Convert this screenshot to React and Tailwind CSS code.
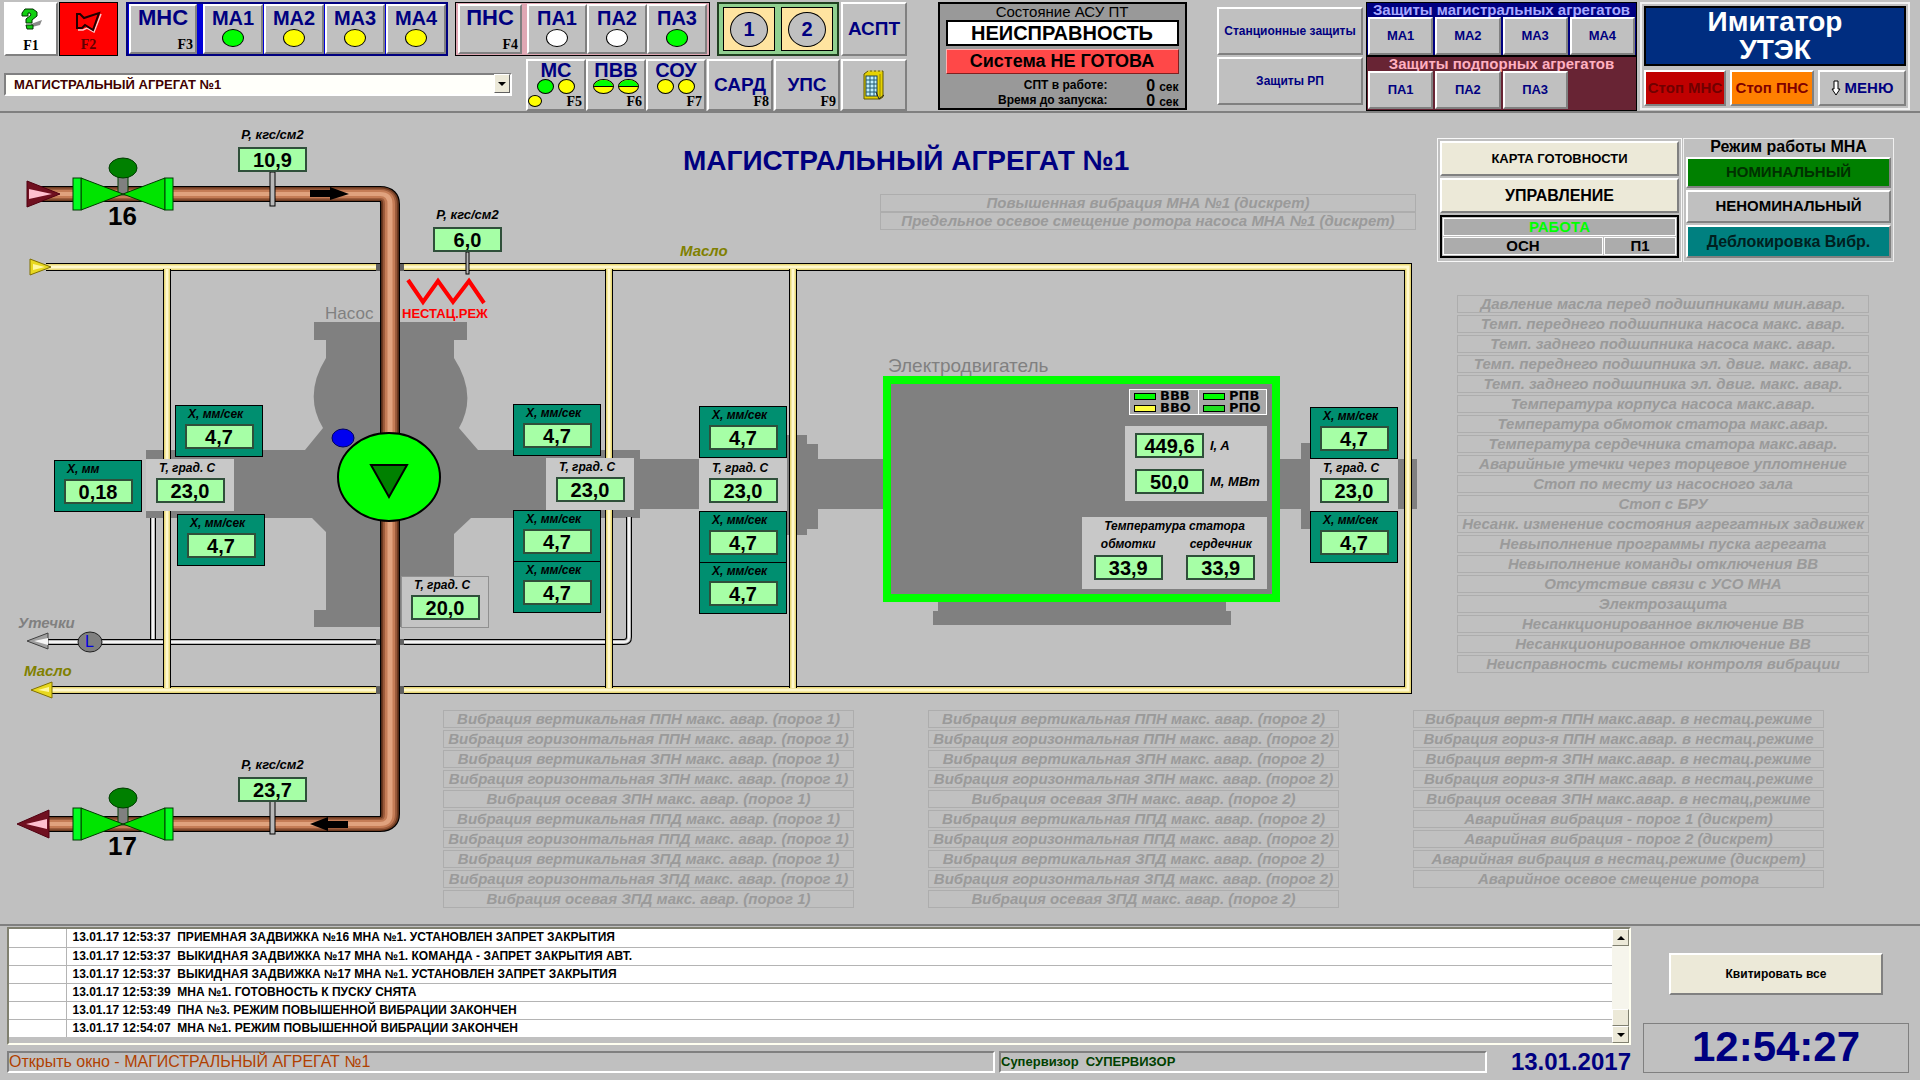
import React from 'react';

const BEVEL = 'border-2 border-t-white border-l-white border-b-[#808080] border-r-[#808080]';

function BevelButton({ className = '', children, ...rest }) {
  return (
    <button type="button" className={`${BEVEL} relative ${className}`} {...rest}>
      {children}
    </button>
  );
}

const LAMP = { green: 'bg-[#00ff00]', yellow: 'bg-[#ffff00]', white: 'bg-white' };

function Lamp({ color, className = 'h-[18px] w-[22px]' }) {
  return <span className={`block rounded-[50%] border border-black ${LAMP[color]} ${className}`} />;
}

function SplitLamp() {
  return (
    <span className="flex h-[15px] w-[21px] flex-col overflow-hidden rounded-[50%] border border-black bg-[#ffff00]">
      <span className="h-[7px] border-b border-black bg-[#00ff00]" />
    </span>
  );
}

function KeyHint({ children }) {
  return (
    <span className="absolute right-0.5 bottom-0 font-['Liberation_Serif',serif] text-sm leading-[15px] font-bold text-black">
      {children}
    </span>
  );
}

function UnitButton({ name, color }) {
  return (
    <BevelButton className="flex w-[60px] flex-col items-center bg-[#c0c0c0] pt-px text-xl leading-[22px] font-bold text-[#000080]">
      {name}
      <Lamp color={color} />
    </BevelButton>
  );
}

function SystemButton({ name, hint, lamps, extra }) {
  return (
    <BevelButton className="flex w-[60px] flex-col items-center bg-[#c0c0c0] text-xl leading-[18px] font-bold text-[#000080]">
      {name}
      <span className="flex gap-1">{lamps}</span>
      {extra}
      <KeyHint>{hint}</KeyHint>
    </BevelButton>
  );
}

function HelpIcon() {
  return (
    <svg viewBox="0 0 24 22" className="h-[22px] w-6" aria-hidden="true">
      <path d="M12 16 L23 12 L21 17 L13 19Z" fill="#8a8a8a" />
      <path
        d="M3 8 V5 L6 1 H14 L18 4 V8 L13 12 V15 H7 V11 L12 7 L11 5 H9 V8Z"
        fill="#10d010"
        stroke="#003000"
        strokeWidth="1"
      />
      <path d="M7 17 H14 V21 H8Z" fill="#10d010" stroke="#003000" strokeWidth="1" />
    </svg>
  );
}

function HornIcon() {
  return (
    <svg viewBox="0 0 28 22" className="h-[22px] w-7" aria-hidden="true">
      <path d="M3 19 H8 L12 17 L19 21 L26 3" fill="none" stroke="#ffc8c8" strokeWidth="1.5" />
      <path d="M2 3 H5 L9 7 L24 2 L18 19 L10 14 L7 17 H2Z" fill="#f00" stroke="#200000" strokeWidth="2" />
    </svg>
  );
}

function CabinetIcon() {
  return (
    <svg viewBox="0 0 24 32" className="h-8 w-6" aria-hidden="true">
      <path d="M2 5 L6 2 H21 V28 L18 30 H2Z" fill="#e6d200" stroke="#605800" />
      <path d="M6 2 H21" stroke="#fff08a" strokeDasharray="2 2" />
      <rect x="4" y="7" width="11" height="20" fill="#bfefff" stroke="#204050" />
      <path d="M8 7 V27 M12 7 V27 M4 11 H15 M4 15 H15 M4 19 H15 M4 23 H15" stroke="#205a70" />
      <path d="M18 5 V29" stroke="#8c8000" />
      <path d="M14 23 L17 30 L22 26" fill="none" stroke="#222" />
    </svg>
  );
}

function ProtectionGroup({ title, units, className, titleClass }) {
  return (
    <section className={`border border-black px-px ${className}`}>
      <h2 className={`text-center text-[15px] leading-[14px] font-bold whitespace-nowrap ${titleClass}`}>{title}</h2>
      <div className="grid h-[38px] grid-cols-4 gap-0.5">
        {units.map((u) => (
          <BevelButton key={u} className="bg-[#c0c0c0] text-[13px] font-bold text-[#000080]">
            {u}
          </BevelButton>
        ))}
      </div>
    </section>
  );
}

function Header() {
  return (
    <header className="mb-px flex h-[113px] justify-between border-b-2 border-[#808080] pt-0.5 pr-2.5 pl-1">
      <div className="flex w-[903px] flex-col gap-[3px]">
        <div className="flex h-[54px]">
          <div className="flex gap-px">
            <BevelButton className="flex w-[54px] flex-col items-center justify-between bg-white pt-1">
              <HelpIcon />
              <span className="font-['Liberation_Serif',serif] text-sm leading-4 font-bold">F1</span>
            </BevelButton>
            <button type="button" className="flex w-[59px] flex-col items-center justify-between border border-black bg-[#ff0000] pt-2 pb-0.5">
              <HornIcon />
              <span className="font-['Liberation_Serif',serif] text-sm leading-4 font-bold text-[#600000]">F2</span>
            </button>
          </div>
          <div className="ml-2 flex gap-px border-2 border-[#000080] bg-[#0000d8] pl-px">
            <BevelButton className="mr-[5px] flex w-[68px] justify-center bg-[#c0c0c0] text-[22px] leading-6 font-bold text-[#000080]">
              МНС
              <KeyHint>F3</KeyHint>
            </BevelButton>
            <UnitButton name="МА1" color="green" />
            <UnitButton name="МА2" color="yellow" />
            <UnitButton name="МА3" color="yellow" />
            <UnitButton name="МА4" color="yellow" />
          </div>
          <div className="ml-[7px] flex border border-black bg-[#e0a8b4] px-0.5 py-px">
            <BevelButton className="mr-[5px] flex w-[64px] justify-center bg-[#c0c0c0] text-[22px] leading-6 font-bold text-[#000080]">
              ПНС
              <KeyHint>F4</KeyHint>
            </BevelButton>
            <UnitButton name="ПА1" color="white" />
            <UnitButton name="ПА2" color="white" />
            <UnitButton name="ПА3" color="green" />
          </div>
          <div className="ml-[7px] flex gap-1.5 border-2 border-[#204020] bg-[#90d090] px-1 py-[3px]">
            {['1', '2'].map((n) => (
              <button key={n} type="button" className="flex w-[52px] items-center justify-center border border-black bg-[#ffe4a0]">
                <span className="flex h-[35px] w-[38px] items-center justify-center rounded-[50%] border border-black bg-[#c0c0c0] text-xl font-bold text-[#000080]">
                  {n}
                </span>
              </button>
            ))}
          </div>
          <BevelButton className="ml-0.5 flex-1 bg-[#c0c0c0] text-[19px] font-bold text-[#000080]">АСПТ</BevelButton>
        </div>
        <div className="flex h-[52px] justify-between">
          <div className="relative mt-[13px] h-[23px] w-[508px]">
            <select
              aria-label="Окно"
              className="h-[23px] w-full appearance-none border-2 border-t-[#808080] border-r-white border-b-white border-l-[#808080] bg-[#fffffa] py-0 pr-5 pl-2 text-[13px] leading-[19px] font-bold text-[#400000]"
            >
              <option>МАГИСТРАЛЬНЫЙ АГРЕГАТ №1</option>
            </select>
            <span className="pointer-events-none absolute top-0.5 right-0.5 flex h-[19px] w-4 items-center justify-center border border-t-white border-r-[#606060] border-b-[#606060] border-l-white bg-[#ece9d8]">
              <svg viewBox="0 0 8 4" className="h-1 w-2"><path d="M0 0H8L4 4Z" /></svg>
            </span>
          </div>
          <div className="flex gap-px">
            <div className="flex">
              <SystemButton
                name="МС"
                hint="F5"
                lamps={<><Lamp color="green" className="h-[15px] w-[17px]" /><Lamp color="yellow" className="h-[15px] w-[17px]" /></>}
                extra={<Lamp color="yellow" className="absolute bottom-0.5 left-0 h-3 w-[14px]" />}
              />
              <SystemButton name="ПВВ" hint="F6" lamps={<><SplitLamp /><SplitLamp /></>} />
              <SystemButton
                name="СОУ"
                hint="F7"
                lamps={<><Lamp color="yellow" className="h-[15px] w-[17px]" /><Lamp color="yellow" className="h-[15px] w-[17px]" /></>}
              />
            </div>
            <BevelButton className="w-[66px] bg-[#c0c0c0] text-[19px] font-bold text-[#000080]">САРД<KeyHint>F8</KeyHint></BevelButton>
            <BevelButton className="w-[66px] bg-[#c0c0c0] text-[19px] font-bold text-[#000080]">УПС<KeyHint>F9</KeyHint></BevelButton>
            <BevelButton className="flex w-[66px] items-center justify-center bg-[#c0c0c0]" aria-label="Шкаф"><CabinetIcon /></BevelButton>
          </div>
        </div>
      </div>

      <section className="flex h-[108px] w-[249px] flex-col border-2 border-black bg-[#999999] px-1.5">
        <h2 className="text-center text-[15px] leading-4">Состояние АСУ ПТ</h2>
        <p className="border-2 border-black bg-white text-center text-xl leading-[22px] font-bold">НЕИСПРАВНОСТЬ</p>
        <p className="mt-[3px] border border-t-[#ffb0b0] border-r-[#802020] border-b-[#802020] border-l-[#ffb0b0] bg-[#ff4848] text-center text-lg leading-[23px] font-bold">
          Система НЕ ГОТОВА
        </p>
        <dl className="mt-1 grid auto-rows-[15px] grid-cols-[162px_1fr] text-xs leading-[15px] font-bold">
          <dt className="text-right">СПТ в работе:</dt>
          <dd className="flex items-baseline justify-end gap-1"><span className="text-base leading-[15px]">0</span> сек</dd>
          <dt className="text-right">Время до запуска:</dt>
          <dd className="flex items-baseline justify-end gap-1"><span className="text-base leading-[15px]">0</span> сек</dd>
        </dl>
      </section>

      <div className="flex gap-[3px]">
        <div className="flex w-[146px] flex-col gap-0.5 pt-[5px]">
          <BevelButton className="h-12 bg-[#c0c0c0] text-xs font-bold text-[#000080]">Станционные защиты</BevelButton>
          <BevelButton className="h-12 bg-[#c0c0c0] text-xs font-bold text-[#000080]">Защиты РП</BevelButton>
        </div>
        <div className="w-[271px]">
          <ProtectionGroup title="Защиты магистральных агрегатов" units={['МА1', 'МА2', 'МА3', 'МА4']} className="h-[54px] bg-[#000080]" titleClass="text-[#a8a8ff]" />
          <ProtectionGroup title="Защиты подпорных агрегатов" units={['ПА1', 'ПА2', 'ПА3']} className="h-[55px] bg-[#682434]" titleClass="text-[#ffb0c0]" />
        </div>
        <div className="flex h-[108px] w-[270px] flex-col gap-1 border-2 border-[#f0f0f0] p-0.5">
          <h1 className="h-[60px] border-2 border-black bg-[#002d80] text-center text-[28px] leading-7 font-bold text-white">
            Имитатор
            <br />
            УТЭК
          </h1>
          <div className="flex h-[37px] gap-1">
            <BevelButton className="w-[82px] bg-[#c00000] text-[15px] font-bold whitespace-nowrap text-[#700000]">Стоп МНС</BevelButton>
            <BevelButton className="w-[84px] bg-[#ff8000] text-[15px] font-bold whitespace-nowrap text-[#800000]">Стоп ПНС</BevelButton>
            <BevelButton className="flex flex-1 items-center justify-center gap-1 bg-[#c0c0c0] text-[15px] font-bold text-[#000080]">
              <svg viewBox="0 0 10 16" className="h-4 w-2.5"><path d="M3 1H7V9H9L5 15L1 9H3Z" fill="#fff" stroke="#000" /></svg>
              МЕНЮ
            </BevelButton>
          </div>
        </div>
      </div>
    </header>
  );
}

const TOP_ALARMS = [
  'Повышенная вибрация МНА №1 (дискрет)',
  'Предельное осевое смещение ротора насоса МНА №1 (дискрет)',
];

const SIDE_ALARMS = [
  'Давление масла перед подшипниками мин.авар.',
  'Темп. переднего подшипника насоса макс. авар.',
  'Темп. заднего подшипника насоса макс. авар.',
  'Темп. переднего подшипника эл. двиг. макс. авар.',
  'Темп. заднего подшипника эл. двиг. макс. авар.',
  'Температура корпуса насоса макс.авар.',
  'Температура обмоток статора макс.авар.',
  'Температура сердечника статора макс.авар.',
  'Аварийные утечки через торцевое уплотнение',
  'Стоп по месту из насосного зала',
  'Стоп с БРУ',
  'Несанк. изменение состояния агрегатных задвижек',
  'Невыполнение программы пуска агрегата',
  'Невыполнение команды отключения ВВ',
  'Отсутствие связи с УСО МНА',
  'Электрозащита',
  'Несанкционированное включение ВВ',
  'Несанкционированное отключение ВВ',
  'Неисправность системы контроля вибрации',
];

const thresholdAlarms = (n) =>
  ['ППН', 'ЗПН', 'ППД', 'ЗПД'].flatMap((p) => [
    `Вибрация вертикальная ${p} макс. авар. (порог ${n})`,
    `Вибрация горизонтальная ${p} макс. авар. (порог ${n})`,
    ...(p[0] === 'З' ? [`Вибрация осевая ${p} макс. авар. (порог ${n})`] : []),
  ]);

const MODE_ALARMS = [
  'Вибрация верт-я ППН макс.авар. в нестац.режиме',
  'Вибрация гориз-я ППН макс.авар. в нестац.режиме',
  'Вибрация верт-я ЗПН макс.авар. в нестац.режиме',
  'Вибрация гориз-я ЗПН макс.авар. в нестац.режиме',
  'Вибрация осевая ЗПН макс.авар. в нестац,режиме',
  'Аварийная вибрация - порог 1 (дискрет)',
  'Аварийная вибрация - порог 2 (дискрет)',
  'Аварийная вибрация в нестац.режиме (дискрет)',
  'Аварийное осевое смещение ротора',
];

function AlarmList({ items, className = '' }) {
  return (
    <ul className={`flex flex-col gap-0.5 text-center text-[15px] leading-4 font-bold whitespace-nowrap text-[#9a9a9a] italic ${className}`}>
      {items.map((t) => (
        <li key={t} className="h-[18px] border border-[#adadad]">{t}</li>
      ))}
    </ul>
  );
}

function ValueBox({ children }) {
  return (
    <output className="block h-[25px] w-[69px] border-2 border-[#2f4f3a] bg-[#a6ffa6] text-center text-xl leading-[22px] font-bold text-black not-italic">
      {children}
    </output>
  );
}

const CARD_STYLE = {
  vib: 'border border-black bg-[#008f70]',
  temp: 'border border-[#c8c8c8] bg-[#c8c8c8]',
  tempLined: 'border border-[#909090] bg-[#c4c4c4]',
};

// Measurement cards: canvas x, y, kind, caption, value.
const CARDS = [
  [175, 291, 'vib', 'X, мм/сек', '4,7'],
  [54, 346, 'vib', 'X, мм', '0,18'],
  [146, 345, 'temp', 'T, град. C', '23,0'],
  [177, 400, 'vib', 'X, мм/сек', '4,7'],
  [513, 290, 'vib', 'X, мм/сек', '4,7'],
  [546, 344, 'temp', 'T, град. C', '23,0'],
  [513, 396, 'vib', 'X, мм/сек', '4,7'],
  [513, 447, 'vib', 'X, мм/сек', '4,7'],
  [699, 292, 'vib', 'X, мм/сек', '4,7'],
  [699, 345, 'temp', 'T, град. C', '23,0'],
  [699, 397, 'vib', 'X, мм/сек', '4,7'],
  [699, 448, 'vib', 'X, мм/сек', '4,7'],
  [1310, 293, 'vib', 'X, мм/сек', '4,7'],
  [1310, 345, 'temp', 'T, град. C', '23,0'],
  [1310, 397, 'vib', 'X, мм/сек', '4,7'],
  [401, 462, 'tempLined', 'T, град. C', '20,0'],
];

const GAUGES = [
  [238, 13, '10,9'],
  [433, 93, '6,0'],
  [238, 643, '23,7'],
];

const PIPE_LAYERS = [
  ['#000000', 16],
  ['#6e3a20', 14],
  ['#9c5c3c', 11],
  ['#c47c56', 8],
  ['#e0a27e', 4],
];

function Valve({ y }) {
  return (
    <g stroke="#003c00" strokeWidth="1">
      <rect x="118" y={y - 17} width="10" height="18" fill="#808080" />
      <path d={`M81 ${y - 16} L123 ${y} L81 ${y + 16}Z`} fill="#00e400" />
      <path d={`M165 ${y - 16} L123 ${y} L165 ${y + 16}Z`} fill="#00e400" />
      <rect x="73" y={y - 16} width="8" height="32" fill="#00ff20" />
      <rect x="165" y={y - 16} width="8" height="32" fill="#00ff20" />
      <ellipse cx="123" cy={y - 26} rx="14" ry="10" fill="#008000" />
    </g>
  );
}

function YellowPipe({ d }) {
  return (
    <>
      <path d={d} fill="none" stroke="#000" strokeWidth="8" />
      <path d={d} fill="none" stroke="#e8d878" strokeWidth="6" />
      <path d={d} fill="none" stroke="#fff8cc" strokeWidth="3" />
    </>
  );
}

function GreyPipe({ d }) {
  return (
    <>
      <path d={d} fill="none" stroke="#000" strokeWidth="6" />
      <path d={d} fill="none" stroke="#b8b8b8" strokeWidth="4" />
      <path d={d} fill="none" stroke="#f4f4f4" strokeWidth="2" />
    </>
  );
}

function Drawing() {
  return (
    <svg viewBox="0 114 1420 810" className="block h-[810px] w-[1420px]" aria-hidden="true">
      <g fill="#808080">
        <path d="M314 322 H467 V340 H454 V358 Q478 395 459 428 L478 450 H640 V459 H883 V509 H640 V518 H471 L454 534 V627 H314 V610 H326 V532 L312 518 H146 V450 H305 L323 428 Q303 395 326 358 V340 H314Z" />
        <rect x="787" y="435" width="20" height="100" />
        <rect x="807" y="444" width="11" height="85" />
        <rect x="1279" y="459" width="138" height="50" />
        <rect x="1301" y="443" width="70" height="86" />
        <rect x="938" y="600" width="288" height="12" />
        <rect x="933" y="611" width="298" height="14" />
      </g>

      <GreyPipe d="M153 518 V641" />
      <GreyPipe d="M48 642 H624 Q629 642 629 637 V517" />
      <path d="M27 641 L48 633 V649Z" fill="#a0a0a0" stroke="#404040" />
      <path d="M34 641 L48 638 V645Z" fill="#f4f4f4" />
      <ellipse cx="90" cy="642" rx="12" ry="10" fill="#808080" stroke="#202020" />

      <YellowPipe d="M46 267 H1408 V690 H50" />
      <YellowPipe d="M167 269 V688" />
      <YellowPipe d="M609 269 V688" />
      <YellowPipe d="M793 269 V688" />
      <path d="M30 259 L51 267 L30 275Z" fill="#e8d820" stroke="#807000" />
      <path d="M33 264 L45 267 L33 270Z" fill="#fff8a0" />
      <path d="M52 682 L31 690 L52 698Z" fill="#e8d820" stroke="#807000" />
      <path d="M49 687 L38 690 L49 692Z" fill="#fff8a0" />
      <g fill="#606060">
        <rect x="376" y="264" width="28" height="7" />
        <rect x="376" y="686" width="28" height="8" />
        <rect x="376" y="639" width="28" height="6" />
      </g>

      <g transform="scale(1.25 1)" fill="none">
        {PIPE_LAYERS.map(([stroke, width]) => (
          <path key={stroke} d="M24 194 H304 Q312 194 312 204 V814 Q312 824 304 824 H34" stroke={stroke} strokeWidth={width} />
        ))}
      </g>
      <path d="M27 181 L60 194 L27 207Z" fill="#701020" stroke="#500010" />
      <path d="M29 189 L52 194 L29 199Z" fill="#ffc0d0" />
      <path d="M49 810 L17 824 L49 838Z" fill="#701020" stroke="#500010" />
      <path d="M47 819 L26 824 L47 829Z" fill="#ffc0d0" />
      <Valve y={194} />
      <Valve y={824} />
      <g fill="#b8b8b8" stroke="#000">
        <rect x="270" y="172" width="5" height="34" />
        <rect x="270" y="801" width="5" height="33" />
        <rect x="466" y="252" width="3" height="22" />
      </g>
      <path d="M310 190 H330 V187 L349 194 L330 200 V197 H310Z" />
      <path d="M348 821 H328 V817 L310 824 L328 831 V828 H348Z" />

      <ellipse cx="389" cy="477" rx="51" ry="44" fill="#00ff00" stroke="#000" strokeWidth="2" />
      <path d="M371 465 H407 L389 497Z" fill="#008000" stroke="#000" strokeWidth="2" />
      <ellipse cx="343" cy="438" rx="11" ry="9" fill="#0000f0" stroke="#000060" />
      <path d="M408 280 L423 302 L438 281 L453 302 L469 281 L484 303" fill="none" stroke="#ff0000" strokeWidth="4" />
    </svg>
  );
}

function MotorPanel() {
  return (
    <section className="absolute top-[262px] left-[883px] h-[226px] w-[397px] border-8 border-[#00ff00] bg-[#808080]">
      <div className="flex h-full flex-col items-end pt-[5px] pr-[5px] pb-[5px]">
        <ul className="grid h-[26px] grid-cols-2 border border-white bg-[#a8a8a8] font-['DejaVu_Sans',sans-serif] text-[13px] leading-3 font-bold">
          {[
            ['ВВВ', 'bg-[#00ff00]'],
            ['РПВ', 'bg-[#00ff00]'],
            ['ВВО', 'bg-[#ffff40]'],
            ['РПО', 'bg-[#20e020]'],
          ].map(([name, color]) => (
            <li key={name} className="flex w-[68px] items-center gap-1 pl-1 even:border-l even:border-white">
              <span className={`h-[7px] w-[22px] border border-black ${color}`} />
              {name}
            </li>
          ))}
        </ul>
        <dl className="mt-[11px] grid h-[75px] w-[142px] grid-cols-[69px_1fr] content-between items-center gap-x-1.5 bg-[#c8c8c8] py-[7px] pl-[10px] text-[13px] font-bold italic">
          <dd><ValueBox>449,6</ValueBox></dd>
          <dt>I, A</dt>
          <dd><ValueBox>50,0</ValueBox></dd>
          <dt className="whitespace-nowrap">М, МВт</dt>
        </dl>
        <div className="mt-auto h-[72px] w-[185px] bg-[#c8c8c8] text-center text-xs leading-[18px] font-bold italic">
          <h3>Температура статора</h3>
          <div className="grid grid-cols-2 justify-items-center">
            <div className="flex flex-col items-center gap-0.5">обмотки<ValueBox>33,9</ValueBox></div>
            <div className="flex flex-col items-center gap-0.5">сердечник<ValueBox>33,9</ValueBox></div>
          </div>
        </div>
      </div>
    </section>
  );
}

function Mimic() {
  return (
    <section className="relative col-start-1 row-span-2 row-start-1 h-[810px] w-[1420px]">
      <Drawing />
      <h2 className="absolute top-[33px] left-[683px] text-[28px] leading-7 font-bold whitespace-nowrap text-[#000080]">МАГИСТРАЛЬНЫЙ АГРЕГАТ №1</h2>
      <AlarmList items={TOP_ALARMS} className="absolute top-[80px] left-[880px] w-[536px] gap-0!" />

      <span className="absolute top-[90px] left-[108px] text-[26px] leading-6 font-bold">16</span>
      <span className="absolute top-[720px] left-[108px] text-[26px] leading-6 font-bold">17</span>
      <span className="absolute top-[128px] left-[680px] text-[15px] leading-[18px] font-bold text-[#808000] italic">Масло</span>
      <span className="absolute top-[548px] left-[24px] text-[15px] leading-[18px] font-bold text-[#808000] italic">Масло</span>
      <span className="absolute top-[500px] left-[18px] text-[15px] leading-[18px] font-bold text-[#808080] italic">Утечки</span>
      <span className="absolute top-[519px] left-[85px] text-base leading-[18px] text-[#0000e0]">L</span>
      <span className="absolute top-[190px] left-[325px] text-[17px] leading-5 text-[#808080]">Насос</span>
      <span className="absolute top-[190px] left-[402px] text-[13px] leading-5 font-bold text-[#ff0000]">НЕСТАЦ.РЕЖ</span>
      <span className="absolute top-[242px] left-[888px] text-[19px] leading-5 text-[#808080]">Электродвигатель</span>

      {GAUGES.map(([x, y, value]) => (
        <div key={`${x}-${y}`} className="absolute flex w-[69px] flex-col items-center gap-1 whitespace-nowrap" style={{ left: x, top: y }}>
          <span className="text-[13px] leading-4 font-bold italic">P, кгс/см2</span>
          <ValueBox>{value}</ValueBox>
        </div>
      ))}
      {CARDS.map(([x, y, kind, caption, value]) => (
        <div key={`${x}-${y}`} className={`absolute flex h-[52px] w-[88px] flex-col items-center gap-0.5 ${CARD_STYLE[kind]}`} style={{ left: x, top: y }}>
          <span className="w-[62px] text-left text-xs leading-4 font-bold whitespace-nowrap italic">{caption}</span>
          <ValueBox>{value}</ValueBox>
        </div>
      ))}
      <MotorPanel />
    </section>
  );
}

function ControlPanel() {
  return (
    <div className="grid h-[124px] grid-cols-[245px_211px] gap-px">
      <section className="flex flex-col gap-0.5 border border-[#f8f8f8] p-0.5">
        <BevelButton className="h-[35px] bg-[#ece9d8] text-[13px] font-bold">КАРТА ГОТОВНОСТИ</BevelButton>
        <BevelButton className="h-[35px] bg-[#ece9d8] text-base font-bold">УПРАВЛЕНИЕ</BevelButton>
        <div className="grid h-[43px] grid-cols-[1fr_72px] gap-px border-2 border-black p-px text-center text-[15px] leading-4 font-bold">
          <span className="col-span-2 border border-white bg-[#acacac] text-[#00ff00]">РАБОТА</span>
          <span className="border border-white bg-[#acacac]">ОСН</span>
          <span className="border border-white bg-[#acacac]">П1</span>
        </div>
      </section>
      <section className="flex flex-col gap-0.5 border border-[#f0f0f0] px-0.5 text-[15px] font-bold">
        <h3 className="text-center text-base leading-4">Режим работы МНА</h3>
        <BevelButton className="h-[31px] bg-[#008000] text-[#003000]">НОМИНАЛЬНЫЙ</BevelButton>
        <BevelButton className="h-[33px] bg-[#c0c0c0]">НЕНОМИНАЛЬНЫЙ</BevelButton>
        <BevelButton className="h-[33px] bg-[#008080] text-base text-[#002020]">Деблокировка Вибр.</BevelButton>
      </section>
    </div>
  );
}

const LOG = [
  ['13.01.17 12:53:37', 'ПРИЕМНАЯ ЗАДВИЖКА №16 МНА №1. УСТАНОВЛЕН ЗАПРЕТ ЗАКРЫТИЯ'],
  ['13.01.17 12:53:37', 'ВЫКИДНАЯ ЗАДВИЖКА №17 МНА №1. КОМАНДА - ЗАПРЕТ ЗАКРЫТИЯ АВТ.'],
  ['13.01.17 12:53:37', 'ВЫКИДНАЯ ЗАДВИЖКА №17 МНА №1. УСТАНОВЛЕН ЗАПРЕТ ЗАКРЫТИЯ'],
  ['13.01.17 12:53:39', 'МНА №1. ГОТОВНОСТЬ К ПУСКУ СНЯТА'],
  ['13.01.17 12:53:49', 'ПНА №3. РЕЖИМ ПОВЫШЕННОЙ ВИБРАЦИИ ЗАКОНЧЕН'],
  ['13.01.17 12:54:07', 'МНА №1. РЕЖИМ ПОВЫШЕННОЙ ВИБРАЦИИ ЗАКОНЧЕН'],
];

const SCROLL_PART = 'flex h-[17px] items-center justify-center border border-t-white border-r-[#808070] border-b-[#808070] border-l-white bg-[#ece9d8]';

function Footer() {
  return (
    <footer className="flex min-h-[156px] flex-1 gap-3 border-t-2 border-[#808080] pr-[11px] pl-[7px]">
      <div className="flex min-w-0 flex-1 flex-col gap-1.5 pt-px">
        <div className="flex h-[118px] border-2 border-t-[#808070] border-r-[#fffff0] border-b-[#fffff0] border-l-[#808070]">
          <div className="flex-1">
            <table className="w-full border-collapse bg-white text-xs leading-[17px] font-bold">
              <tbody>
                {LOG.map(([time, text], i) => (
                  <tr key={i} className="h-[18px] border-b border-[#b4b4b4] last:border-b-0">
                    <td className="w-[57px] border-r border-[#b4b4b4] p-0" />
                    <td className="py-0 pr-0 pl-1.5 whitespace-pre">{`${time}  ${text}`}</td>
                  </tr>
                ))}
              </tbody>
            </table>
          </div>
          <div className="flex w-[17px] flex-col justify-between bg-[#f6f5ec]">
            <button type="button" aria-label="Вверх" className={SCROLL_PART}><svg viewBox="0 0 8 4" className="h-1 w-2"><path d="M0 4H8L4 0Z" /></svg></button>
            <div>
              <div className={SCROLL_PART} />
              <button type="button" aria-label="Вниз" className={`w-full ${SCROLL_PART}`}><svg viewBox="0 0 8 4" className="h-1 w-2"><path d="M0 0H8L4 4Z" /></svg></button>
            </div>
          </div>
        </div>
        <div className="flex h-[22px] gap-1 leading-[18px]">
          <p className="flex-1 border-2 border-t-[#808080] border-r-white border-b-white border-l-[#808080] text-base leading-[18px] text-[#b04000]">
            Открыть окно - МАГИСТРАЛЬНЫЙ АГРЕГАТ №1
          </p>
          <p className="w-[488px] border-2 border-t-[#808080] border-r-white border-b-white border-l-[#808080] text-[13px] font-bold whitespace-pre text-[#004000]">
            {'Супервизор  СУПЕРВИЗОР'}
          </p>
          <time className="w-[140px] text-right text-2xl leading-[22px] font-bold text-[#000080]">13.01.2017</time>
        </div>
      </div>
      <div className="flex w-[266px] flex-col items-center gap-7 pt-[27px]">
        <BevelButton className="h-[42px] w-[214px] bg-[#ece9d8] text-xs font-bold">Квитировать все</BevelButton>
        <time className="h-[50px] w-full border border-[#808080] text-center text-[42px] leading-[46px] font-bold text-[#000080]">12:54:27</time>
      </div>
    </footer>
  );
}

export default function App() {
  return (
    <div className="flex min-h-screen flex-col bg-[#c0c0c0] font-['Liberation_Sans',Arial,sans-serif] text-black">
      <Header />
      <main className="grid grid-cols-[1420px_minmax(0,1fr)] grid-rows-[596px_auto]">
        <Mimic />
        <aside className="col-start-2 row-start-1 flex flex-col gap-[33px] pt-6 pl-[17px]">
          <ControlPanel />
          <AlarmList items={SIDE_ALARMS} className="mr-[51px] ml-5" />
        </aside>
        <div className="z-10 col-span-2 col-start-1 row-start-2 flex justify-between pr-24 pl-[443px]">
          <AlarmList items={thresholdAlarms(1)} className="w-[411px]" />
          <AlarmList items={thresholdAlarms(2)} className="w-[411px]" />
          <AlarmList items={MODE_ALARMS} className="w-[411px]" />
        </div>
      </main>
      <Footer />
    </div>
  );
}
